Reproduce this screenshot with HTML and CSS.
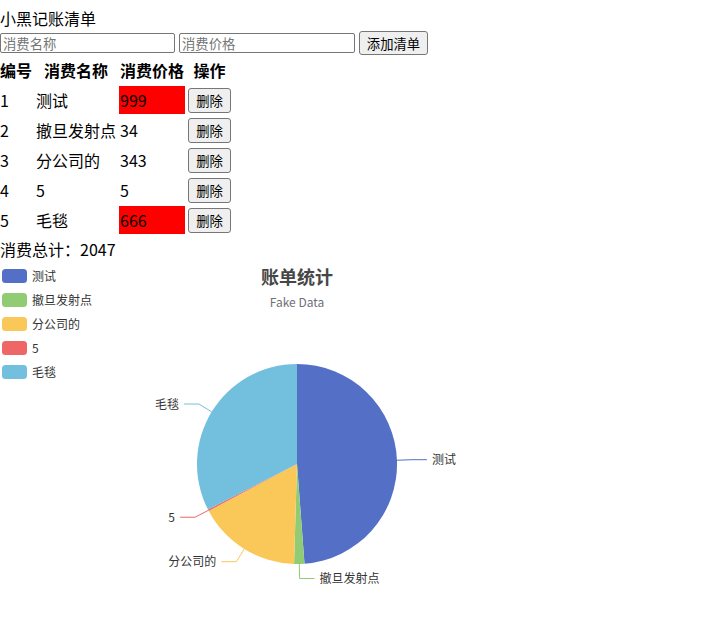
FILE: index.html
```html
<!DOCTYPE html>
<html lang="zh-CN">
<head>
<meta charset="utf-8">
<title>小黑记账清单</title>
<link rel="stylesheet" href="styles.css">
</head>
<body>
<div class="title">小黑记账清单</div>
<div class="form-row">
  <input class="field field-name" type="text" placeholder="消费名称">
  <input class="field field-price" type="text" placeholder="消费价格">
  <button class="btn-add">添加清单</button>
</div>
<table class="bill">
  <thead>
    <tr><th>编号</th><th>消费名称</th><th>消费价格</th><th>操作</th></tr>
  </thead>
  <tbody>
    <tr><td>1</td><td>测试</td><td class="high">999</td><td><button class="btn-del">删除</button></td></tr>
    <tr><td>2</td><td>撤旦发射点</td><td>34</td><td><button class="btn-del">删除</button></td></tr>
    <tr><td>3</td><td>分公司的</td><td>343</td><td><button class="btn-del">删除</button></td></tr>
    <tr><td>4</td><td>5</td><td>5</td><td><button class="btn-del">删除</button></td></tr>
    <tr><td>5</td><td>毛毯</td><td class="high">666</td><td><button class="btn-del">删除</button></td></tr>
  </tbody>
</table>
<div class="total">消费总计：2047</div>
<svg class="chart" width="600" height="360" viewBox="0 0 600 360">
  <g class="legend">
    <rect x="2" y="5" width="25" height="14" rx="3.5" fill="#5470c6"/>
    <text x="32" y="16.5">测试</text>
    <rect x="2" y="29" width="25" height="14" rx="3.5" fill="#91cc75"/>
    <text x="32" y="40.5">撤旦发射点</text>
    <rect x="2" y="53" width="25" height="14" rx="3.5" fill="#fac858"/>
    <text x="32" y="64.5">分公司的</text>
    <rect x="2" y="77" width="25" height="14" rx="3.5" fill="#ee6666"/>
    <text x="32" y="88.5">5</text>
    <rect x="2" y="101" width="25" height="14" rx="3.5" fill="#73c0de"/>
    <text x="32" y="112.5">毛毯</text>
  </g>
  <text class="chart-title" x="297" y="19.5" text-anchor="middle">账单统计</text>
  <text class="chart-sub" x="297" y="43" text-anchor="middle">Fake Data</text>
  <g class="pie">
    <path d="M297,200 L297,100 A100,100 0 0 1 304.51,299.72 Z" fill="#5470c6"/>
    <path d="M297,200 L304.51,299.72 A100,100 0 0 1 294.08,299.96 Z" fill="#91cc75"/>
    <path d="M297,200 L294.08,299.96 A100,100 0 0 1 208.71,246.96 Z" fill="#fac858"/>
    <path d="M297,200 L208.71,246.96 A100,100 0 0 1 208.00,245.60 Z" fill="#ee6666"/>
    <path d="M297,200 L208.00,245.60 A100,100 0 0 1 297,100 Z" fill="#73c0de"/>
  </g>
  <g class="label-lines" fill="none" stroke-width="1">
    <polyline points="396.93,196.25 411.92,195.69 426.92,195.69" stroke="#5470c6"/>
    <polyline points="299.3,300 299.6,314.5 314.6,314.5" stroke="#91cc75"/>
    <polyline points="244.26,284.96 236.35,297.7 221.35,297.7" stroke="#fac858"/>
    <polyline points="208.35,246.29 195.05,253.23 180.05,253.23" stroke="#ee6666"/>
    <polyline points="211.68,147.84 198.88,140.01 183.88,140.01" stroke="#73c0de"/>
  </g>
  <g class="labels">
    <text x="431.9" y="200">测试</text>
    <text x="319.6" y="319">撤旦发射点</text>
    <text x="216.35" y="302" text-anchor="end">分公司的</text>
    <text x="175" y="257.5" text-anchor="end">5</text>
    <text x="178.9" y="144.5" text-anchor="end">毛毯</text>
  </g>
</svg>
</body>
</html>
```
FILE: styles.css
```css
html, body {
  margin: 0;
  padding: 0;
  background: #fff;
}
body {
  font-family: "Noto Sans CJK SC", "Noto Sans", sans-serif;
  font-size: 16px;
  color: #000;
}
.title {
  padding-top: 6px;
  line-height: 24px;
}
.form-row {
  display: flex;
  align-items: center;
  gap: 4px;
  height: 24px;
  margin-top: 1px;
}
.field {
  box-sizing: border-box;
  height: 20px;
  font-family: "Noto Sans CJK SC", sans-serif;
  font-size: 13.333px;
  padding: 0 2px;
  border: 1px solid #767676;
  border-radius: 2px;
}
.field-name { width: 175px; }
.field-price { width: 176px; }
.field::placeholder { color: #757575; }
button {
  font-family: "Noto Sans CJK SC", sans-serif;
  font-size: 13.333px;
  color: #000;
  background: #efefef;
  border: 1px solid #767676;
  border-radius: 3px;
  padding: 0 6px;
  box-sizing: border-box;
}
.btn-add { height: 24px; width: 69px; }
.btn-del { height: 25px; width: 43px; display: block; }
.bill {
  border-spacing: 2px;
  margin-left: -3px;
  margin-top: -1px;
}
.bill tr { height: 28px; }
.bill th, .bill td {
  padding: 1px;
}
.bill th { font-weight: bold; text-align: center; }
.bill td { text-align: left; }
.bill td.high { background: #ff0000; }
.total {
  padding-top: 2px;
  line-height: 23px;
}
.chart {
  display: block;
  margin-top: 3px;
  font-family: "Noto Sans CJK SC", sans-serif;
}
.legend text, .labels text {
  font-size: 12px;
  fill: #333;
}
.chart-title {
  font-size: 18px;
  font-weight: bold;
  fill: #464646;
}
.chart-sub {
  font-size: 12px;
  fill: #6e7079;
}
```
